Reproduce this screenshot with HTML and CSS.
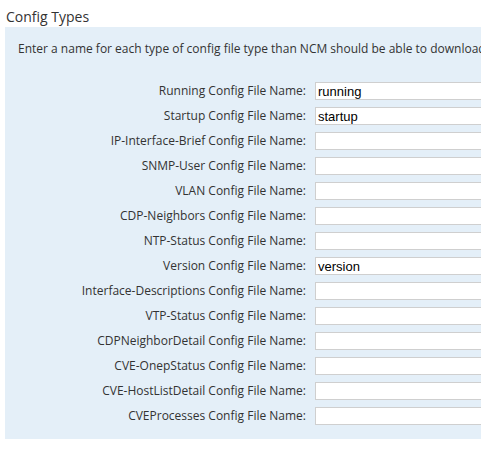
FILE: index.html
```html
<!DOCTYPE html>
<html>
<head>
<meta charset="utf-8">
<link rel="stylesheet" href="styles.css">
</head>
<body>
<h2 class="title">Config Types</h2>
<div class="panel">
  <p class="desc">Enter a name for each type of config file type than NCM should be able to download</p>
  <div class="form">
    <label class="lbl">Running Config File Name:</label><input class="field" type="text" value="running">
    <label class="lbl">Startup Config File Name:</label><input class="field" type="text" value="startup">
    <label class="lbl">IP-Interface-Brief Config File Name:</label><input class="field" type="text" value="">
    <label class="lbl">SNMP-User Config File Name:</label><input class="field" type="text" value="">
    <label class="lbl">VLAN Config File Name:</label><input class="field" type="text" value="">
    <label class="lbl">CDP-Neighbors Config File Name:</label><input class="field" type="text" value="">
    <label class="lbl">NTP-Status Config File Name:</label><input class="field" type="text" value="">
    <label class="lbl">Version Config File Name:</label><input class="field" type="text" value="version">
    <label class="lbl">Interface-Descriptions Config File Name:</label><input class="field" type="text" value="">
    <label class="lbl">VTP-Status Config File Name:</label><input class="field" type="text" value="">
    <label class="lbl">CDPNeighborDetail Config File Name:</label><input class="field" type="text" value="">
    <label class="lbl">CVE-OnepStatus Config File Name:</label><input class="field" type="text" value="">
    <label class="lbl">CVE-HostListDetail Config File Name:</label><input class="field" type="text" value="">
    <label class="lbl">CVEProcesses Config File Name:</label><input class="field" type="text" value="">
  </div>
</div>
</body>
</html>
```
FILE: styles.css
```css
html, body {
  margin: 0;
  padding: 0;
  background: #fff;
  overflow: hidden;
}
body {
  font-family: "Open Sans", "Liberation Sans", sans-serif;
  color: #333;
  width: 481px;
}
.title {
  margin: 0;
  padding: 7px 0 0 6px;
  height: 20px;
  font-size: 14px;
  font-weight: normal;
  line-height: 20px;
  color: #333;
}
.panel {
  margin-left: 5px;
  background: #e4eff8;
  padding: 13px 0 14px 0;
  overflow: hidden;
  width: 476px;
}
.desc {
  margin: 0 0 25px 13px;
  font-size: 12px;
  line-height: 17px;
  white-space: nowrap;
  color: #333;
}
.form {
  display: grid;
  grid-template-columns: 301px 260px;
  column-gap: 9px;
  row-gap: 7px;
  align-items: center;
}
.lbl {
  text-align: right;
  font-size: 12px;
  line-height: 18px;
  color: #333;
  white-space: nowrap;
}
.field {
  box-sizing: border-box;
  height: 18px;
  width: 260px;
  margin: 0;
  padding: 0 2px;
  border: 1px solid #cfcfcf;
  background: #fff;
  font-family: "Liberation Sans", Arial, sans-serif;
  font-size: 13px;
  color: #000;
  outline: none;
}
```
